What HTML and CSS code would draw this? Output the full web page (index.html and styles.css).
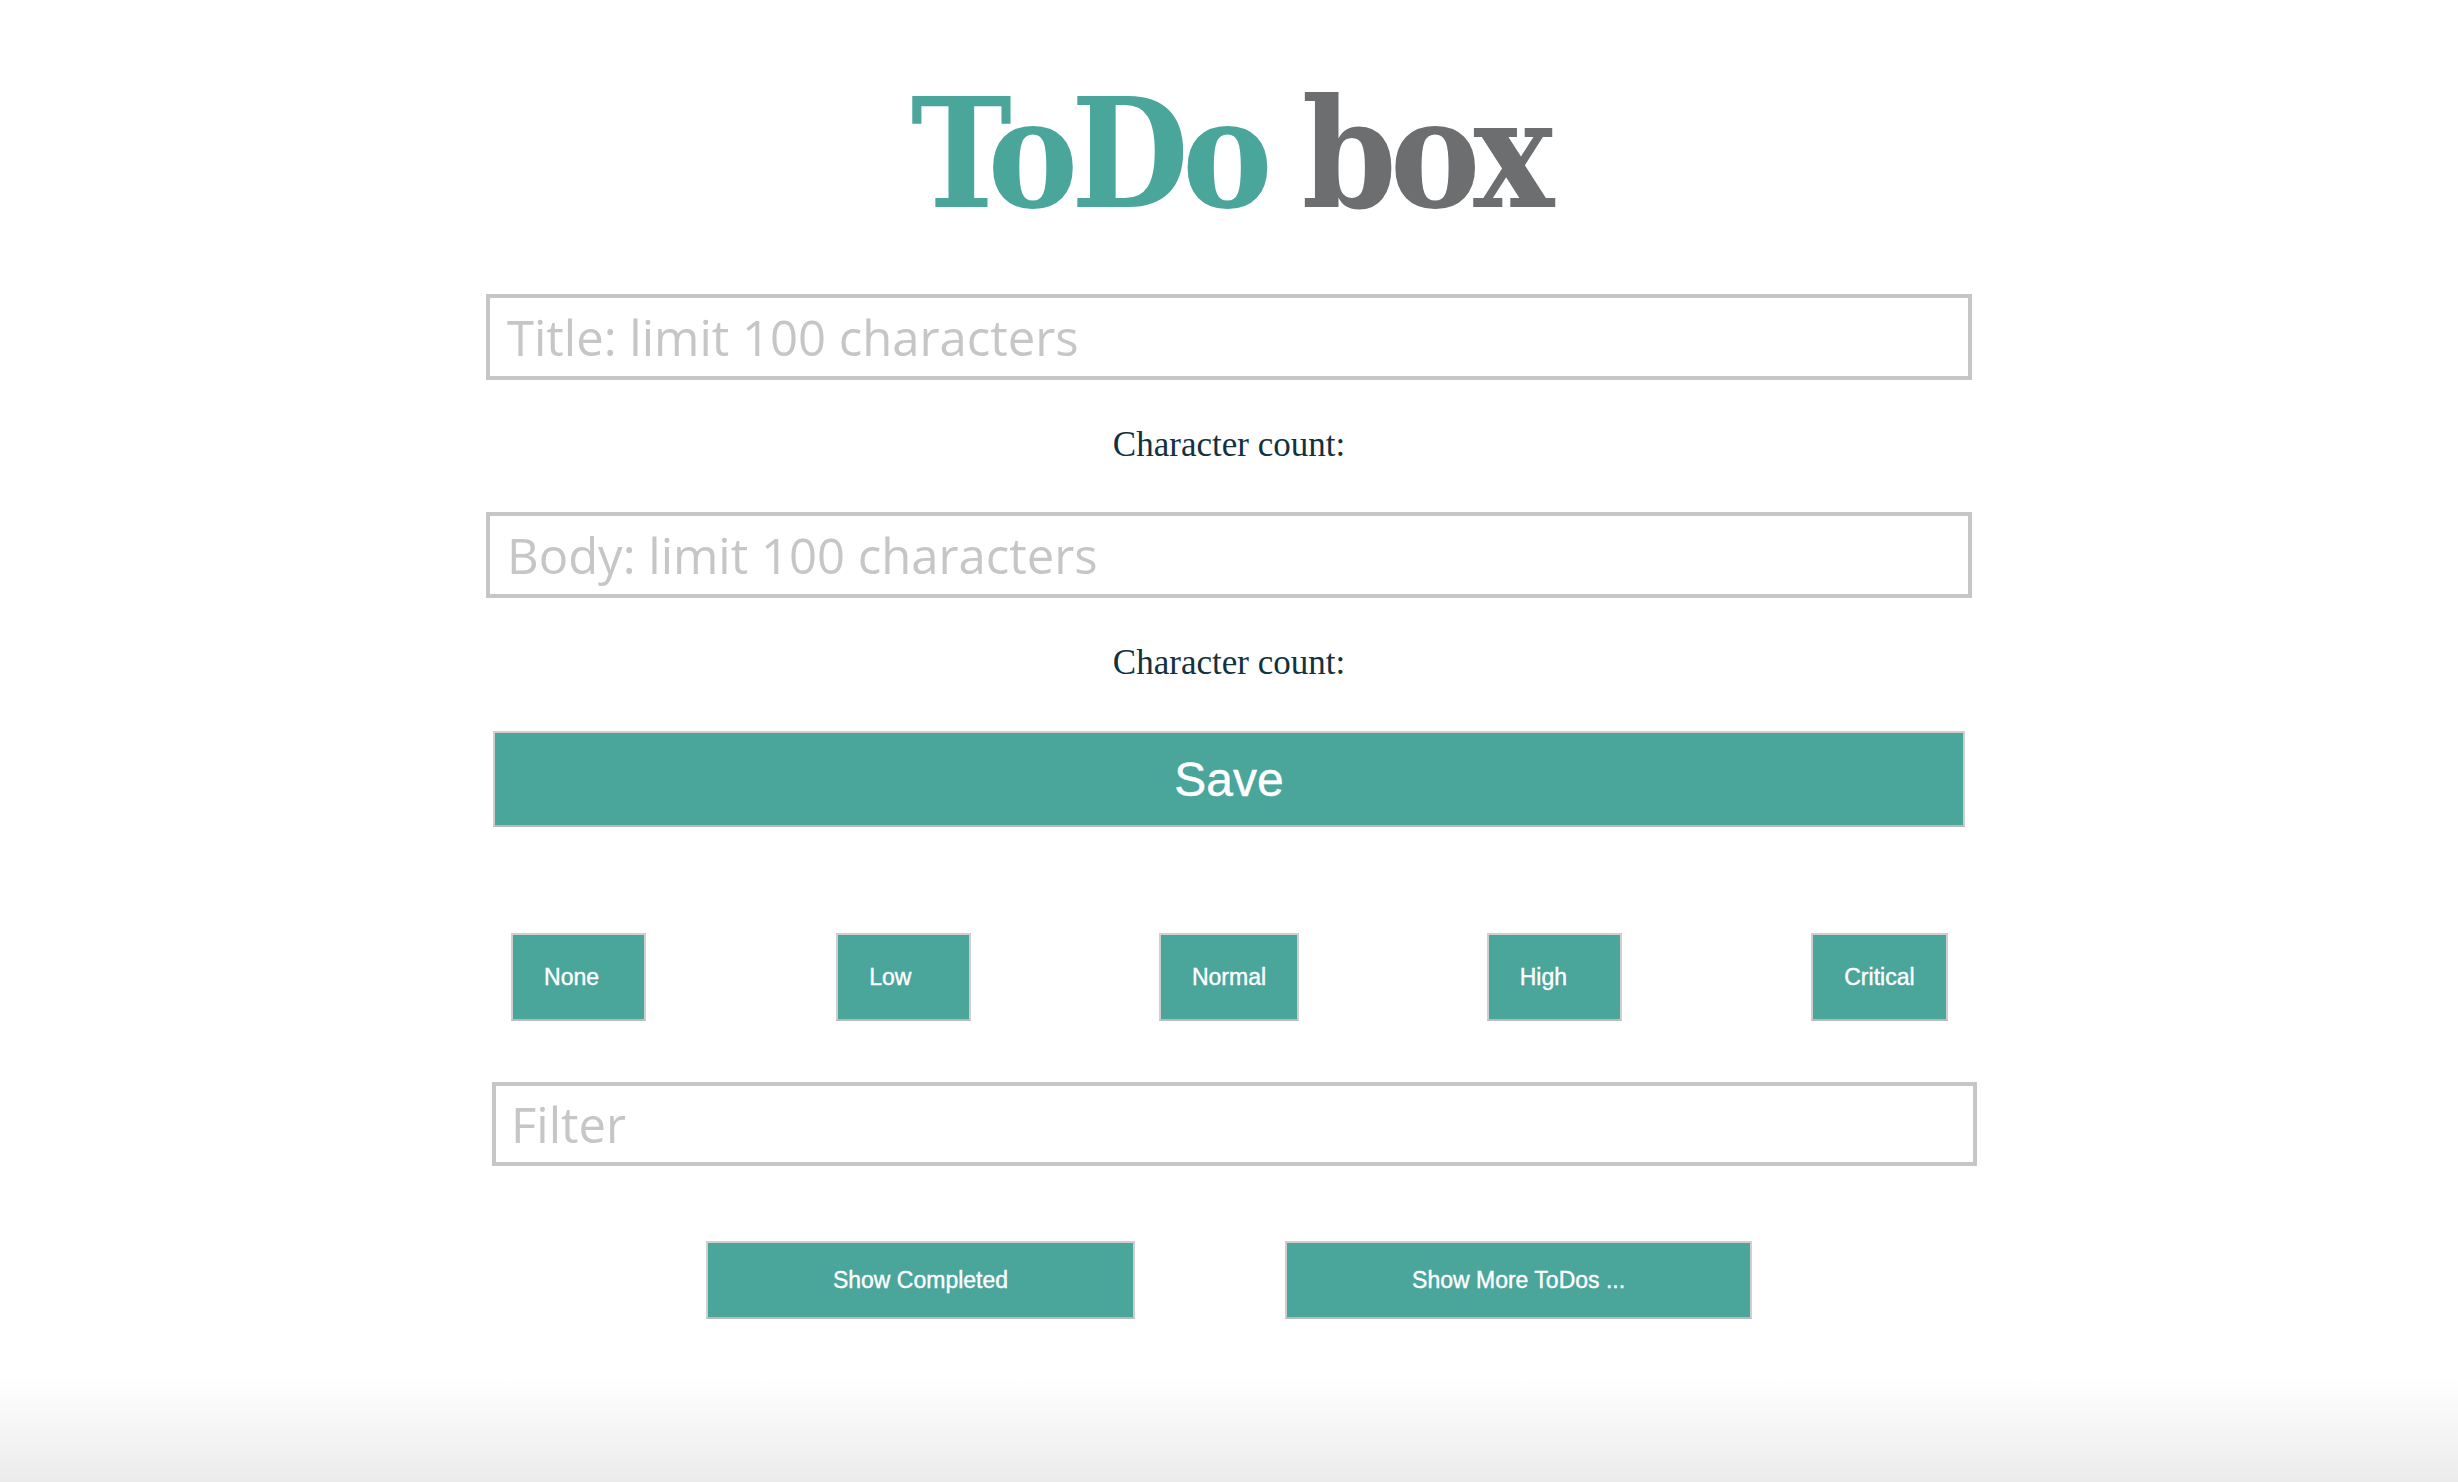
FILE: index.html
```html
<!DOCTYPE html>
<html lang="en">
<head>
<meta charset="utf-8">
<title>ToDo box</title>
<link rel="stylesheet" href="styles.css">
</head>
<body>
<div class="page">
  <header class="brand">
    <h1 class="logo"><span class="logo-todo">ToDo</span> <span class="logo-box">box</span></h1>
  </header>
  <main class="form">
    <label class="field field--title"><input class="field-input" type="text" maxlength="100" placeholder="Title: limit 100 characters"></label>
    <p class="count">Character count:</p>
    <label class="field field--body"><input class="field-input" type="text" maxlength="100" placeholder="Body: limit 100 characters"></label>
    <p class="count">Character count:</p>
    <button class="btn save" type="button">Save</button>
    <div class="priorities">
      <div class="priority-cell"><button class="btn priority" type="button">None</button></div>
      <div class="priority-cell"><button class="btn priority" type="button">Low</button></div>
      <div class="priority-cell"><button class="btn priority" type="button">Normal</button></div>
      <div class="priority-cell"><button class="btn priority" type="button">High</button></div>
      <div class="priority-cell"><button class="btn priority" type="button">Critical</button></div>
    </div>
    <label class="field field--filter"><input class="field-input field-input--filter" type="text" placeholder="Filter"></label>
    <div class="actions">
      <button class="btn action" type="button">Show Completed</button>
      <button class="btn action" type="button">Show More ToDos ...</button>
    </div>
  </main>
</div>
</body>
</html>
```

FILE: styles.css
```css
html {
  height: 100%;
}

body {
  margin: 0;
  min-height: 100%;
  background: linear-gradient(to bottom, #ffffff 0, #ffffff calc(100% - 105px), #ebebeb 100%);
  font-family: "Liberation Sans", Arial, sans-serif;
}

.page {
  width: 1626px;
  margin: 0 auto;
  padding-top: 79px;
}

.logo {
  margin: 0 0 64px;
  text-align: center;
  font-family: "DejaVu Serif Condensed", "DejaVu Serif", serif;
  font-stretch: condensed;
  font-weight: 700;
  font-size: 151px;
  line-height: 151px;
  letter-spacing: -7px;
  word-spacing: -4px;
}

.logo-todo {
  color: #4aa59b;
}

.logo-box {
  color: #6d6e70;
}

.form {
  display: flex;
  flex-direction: column;
}

.field {
  display: flex;
  box-sizing: border-box;
  width: 1486px;
  height: 86px;
  margin: 0 auto;
  border: 4px solid #c6c6c6;
  background: #fff;
}

.field--body {
  margin-top: 47px;
}

.field-input {
  flex: 1;
  min-width: 0;
  border: 0;
  outline: 0;
  margin: 0;
  padding: 0 0 0 17px;
  background: transparent;
  font-family: "Open Sans", sans-serif;
  font-size: 49px;
  color: #555;
}

.field-input::placeholder {
  color: #c6c6c6;
  opacity: 1;
}

.count {
  margin: 45px 0 0;
  text-align: center;
  font-family: "Liberation Serif", "Times New Roman", serif;
  font-size: 35px;
  line-height: 40px;
  color: #13323f;
}

.btn {
  box-sizing: border-box;
  margin: 0;
  background: #4aa59b;
  color: #ffffff;
  border: 2px solid #cfcfcf;
  border-bottom-color: #bababa;
  font-family: "Liberation Sans", Arial, sans-serif;
  -webkit-text-stroke: 0.4px #ffffff;
  cursor: pointer;
}

.save {
  width: 1472px;
  height: 96px;
  margin: 48px auto 0;
  font-size: 48px;
}

.priorities {
  display: grid;
  grid-template-columns: repeat(5, 1fr);
  margin-top: 106px;
}

.priority-cell {
  display: flex;
  justify-content: center;
}

.priority {
  min-width: 135px;
  height: 88px;
  padding: 0 31px;
  text-align: left;
  font-size: 23px;
}

.field--filter {
  width: 1485px;
  height: 84px;
  margin: 61px 0 0 76px;
}

.field-input--filter {
  padding-left: 15px;
}

.actions {
  display: flex;
  justify-content: center;
  gap: 150px;
  margin-top: 75px;
}

.action {
  height: 78px;
  padding: 0 125px;
  font-size: 23px;
}
```
